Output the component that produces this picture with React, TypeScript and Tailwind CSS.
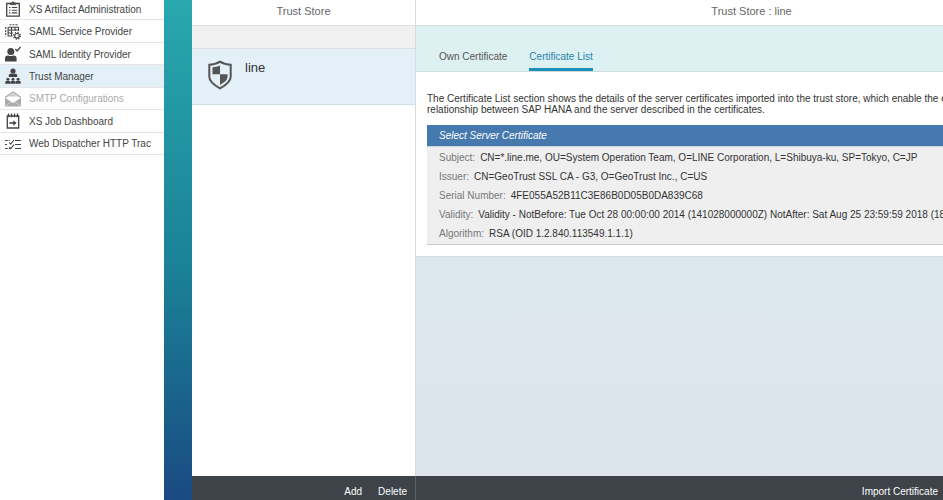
import type { ReactNode } from "react";

const ClipboardIcon = () => (
  <svg width="16" height="16" viewBox="0 0 16 16" fill="none" stroke="currentColor" strokeWidth="1.3">
    <path d="M5 2.500H1.700v12.700h12.600V2.500H11" />
    <path d="M5.200 1.800h1.600L8 .5l1.200 1.300h1.600v2H5.200z" fill="currentColor" strokeWidth="0.6" />
    <path d="M4 6.500h1.400M6.800 6.500h5.400M4 9.200h1.400M6.800 9.200h5.400M4 11.900h1.400M6.800 11.900h5.400" strokeWidth="1.100" />
  </svg>
);

const ServiceIcon = () => (
  <svg width="16" height="16" viewBox="0 0 16 16" fill="none" stroke="currentColor" strokeWidth="1.100">
    <path d="M4.500.8h9" strokeDasharray="2 1" />
    <path d="M.7 3v9.500" strokeDasharray="2 1" />
    <path d="M3.100 3.200h10.400v3.800M3.100 3.200v8.800H7.500M3.100 6h10.400M3.100 9H8M6.500 3v9M10 3v4" />
    <circle cx="12" cy="11.800" r="2.300" />
    <circle cx="12" cy="11.800" r="3.400" strokeWidth="1.300" strokeDasharray="1.200 1.470" />
  </svg>
);

const IdentityIcon = () => (
  <svg width="16" height="16" viewBox="0 0 16 16" fill="currentColor">
    <circle cx="5.800" cy="5.500" r="3.500" />
    <path d="M0 15.500v-3.300c0-1.700 1.200-2.700 2.800-2.700h.6c1.500.8 3.300.8 4.800 0h.6c1.600 0 2.800 1 2.800 2.700v3.300z" />
    <path d="M10.400 3l1.700 1.900L15.600.9" fill="none" stroke="currentColor" strokeWidth="1.300" />
  </svg>
);

const TrustIcon = () => (
  <svg width="16" height="16" viewBox="0 0 16 16" fill="currentColor">
    <circle cx="8" cy="3" r="2.600" />
    <path d="M3.800 9V7.500c0-1.200.8-1.800 1.800-1.800h4.800c1 0 1.800.6 1.800 1.800V9z" />
    <circle cx="2.900" cy="11.300" r="1.500" />
    <circle cx="8" cy="11.300" r="1.500" />
    <circle cx="13.100" cy="11.300" r="1.500" />
    <path d="M.3 15.700v-1.500c0-.8.500-1.200 1-1.200h3.200c.5 0 1 .4 1 1.200v1.500zM5.700 15.700v-1.500c0-.8.4-1.200.9-1.200h2.800c.5 0 .9.400.9 1.200v1.500zM10.500 15.700v-1.500c0-.8.5-1.200 1-1.200h3.200c.5 0 1 .4 1 1.200v1.500z" />
  </svg>
);

const MailIcon = () => (
  <svg width="16" height="16" viewBox="0 0 16 16" fill="currentColor">
    <path d="M0 6.800L8 12l8-5.200v8.700H0z" />
    <path d="M.3 6.300L8 1l7.700 5.300" fill="none" stroke="currentColor" strokeWidth="1.400" />
    <path d="M3.200 5.600h9.600L8 2.200z" opacity=".6" />
    <path d="M.2 15.300L6 11M15.800 15.300L10 11" fill="none" stroke="white" strokeWidth=".5" />
  </svg>
);

const JobIcon = () => (
  <svg width="16" height="16" viewBox="0 0 16 16" fill="none" stroke="currentColor" strokeWidth="1.300">
    <path d="M2.300 3v12h11.400V3z" />
    <path d="M3.500.6v3.600M6.500.6v3.600M9.500.6v3.600M12.500.6v3.600" />
    <path d="M4.500 10h5" strokeWidth="1.600" />
    <path d="M8.300 7.200l3.400 2.800-3.400 2.800z" fill="currentColor" stroke="none" />
  </svg>
);

const TraceIcon = () => (
  <svg width="16" height="16" viewBox="0 0 16 16" fill="none" stroke="currentColor" strokeWidth="1.100">
    <path d="M0 4.500h2.800M3.800 4.500h1M10 4.500h6M0 8.500h2M10 8.500h6M0 12.500h2.800M3.800 12.500h1M10 12.500h6" />
    <path d="M4.300 6.500l1.400 1.600L9 4M4.300 11l1.400 1.600L9 8.600" />
  </svg>
);

const ShieldIcon = () => (
  <svg width="26" height="30" viewBox="0 0 26 30">
    <path
      d="M13 1.700c3.300 2.100 7 3 10.700 3v12c0 5.300-5 8.500-10.700 11.600C7.300 25.200 2.300 22 2.300 16.700v-12c3.700 0 7.400-.9 10.700-3z"
      fill="none"
      stroke="currentColor"
      strokeWidth="2"
    />
    <path d="M13 5.500v8.800H5.500V7.200C8.200 7 10.700 6.500 13 5.500zM13 14.300h7.500v2.500c0 3.500-3.300 5.600-7.500 8.200z" fill="currentColor" />
  </svg>
);

type NavItem = { label: string; icon: ReactNode; active?: boolean; disabled?: boolean };

const navItems: NavItem[] = [
  { label: "XS Artifact Administration", icon: <ClipboardIcon /> },
  { label: "SAML Service Provider", icon: <ServiceIcon /> },
  { label: "SAML Identity Provider", icon: <IdentityIcon /> },
  { label: "Trust Manager", icon: <TrustIcon />, active: true },
  { label: "SMTP Configurations", icon: <MailIcon />, disabled: true },
  { label: "XS Job Dashboard", icon: <JobIcon /> },
  { label: "Web Dispatcher HTTP Trac", icon: <TraceIcon /> },
];

const details = [
  ["Subject:", "CN=*.line.me, OU=System Operation Team, O=LINE Corporation, L=Shibuya-ku, SP=Tokyo, C=JP"],
  ["Issuer:", "CN=GeoTrust SSL CA - G3, O=GeoTrust Inc., C=US"],
  ["Serial Number:", "4FE055A52B11C3E86B0D05B0DA839C68"],
  ["Validity:", "Validity - NotBefore: Tue Oct 28 00:00:00 2014 (141028000000Z) NotAfter: Sat Aug 25 23:59:59 2018 (18"],
  ["Algorithm:", "RSA (OID 1.2.840.113549.1.1.1)"],
];

export default function App() {
  return (
    <div className="flex h-screen overflow-hidden bg-linear-to-b from-[#29a8ae] via-[#1a8096] via-55% to-[#1a4a82] font-['Liberation_Sans',Arial,sans-serif] text-[10px] leading-[11px] text-[#333333]">
      <nav className="mr-7 w-41 shrink-0 overflow-hidden bg-white">
        <ul className="-mt-0.5 grid h-[157px] grid-rows-7">
          {navItems.map((item) => (
            <li key={item.label} className={`border-b border-[#e5e5e5] ${item.active ? "bg-[#e3f0f8]" : ""}`}>
              <button
                disabled={item.disabled}
                className={`flex h-full w-full items-center gap-2 pt-px pl-[5px] whitespace-nowrap ${item.disabled ? "text-[#aaaaaa]" : "text-[#444444]"}`}
              >
                {item.icon}
                {item.label}
              </button>
            </li>
          ))}
        </ul>
      </nav>

      <section className="flex w-56 shrink-0 flex-col border-r border-[#d9dcde] bg-white">
        <h2 className="flex h-[26px] shrink-0 items-center justify-center border-b border-[#dddddd] pb-0.5 text-[11px] text-[#666666]">
          Trust Store
        </h2>
        <div className="h-[23px] shrink-0 border-b border-[#dcdfe1] bg-[#f0f0f0]" />
        <button className="flex h-14 shrink-0 items-start gap-3 border-b border-[#d3dfe6] bg-[#e3f0f8] pt-[11px] pl-[15px] text-left">
          <span className="text-[#555555]">
            <ShieldIcon />
          </span>
          <span className="text-[13px] leading-4">line</span>
        </button>
        <footer className="-mr-px mt-auto flex h-6 shrink-0 items-center justify-end gap-4 border-r border-[#5b6166] bg-[#3d4349] pt-1.5 pr-2 text-white">
          <button>Add</button>
          <button>Delete</button>
        </footer>
      </section>

      <main className="flex min-w-0 flex-1 flex-col overflow-hidden bg-linear-to-b from-[#dbecee] to-[#dde4ec]">
        <h1 className="flex h-[26px] shrink-0 items-center justify-center border-b border-[#d3dfe1] bg-white pb-0.5 pl-36 text-[11px] text-[#666666]">
          Trust Store : line
        </h1>
        <div className="flex h-[46px] shrink-0 items-end gap-[22px] border-b border-[#cfdcde] bg-[#ddf0f2] pl-[23px]">
          <button className="border-b-3 border-transparent pb-1.5 text-[#555555]">Own Certificate</button>
          <button className="border-b-3 border-[#1c8fba] pb-1.5 text-[#2484ab]">Certificate List</button>
        </div>
        <div className="shrink-0 border-b border-[#d3dce0] bg-white pt-[21px] pb-[11px] pl-[11px] whitespace-nowrap">
          <p>
            The Certificate List section shows the details of the server certificates imported into the trust store, which enable the e
            <br />
            relationship between SAP HANA and the server described in the certificates.
          </p>
          <h3 className="mt-2.5 flex h-[22px] items-center border-b border-[#c9d6e2] bg-[#4679ad] pl-3 text-white italic">
            Select Server Certificate
          </h3>
          <dl className="border-b border-[#c8c8c8] bg-[#efefef] pt-px pb-px pl-3">
            {details.map(([term, value]) => (
              <div key={term} className="flex h-[19px] items-center gap-[5px]">
                <dt className="text-[#777777]">{term}</dt>
                <dd>{value}</dd>
              </div>
            ))}
          </dl>
        </div>
        <footer className="mt-auto flex h-6 shrink-0 items-center justify-end bg-[#3d4349] pt-1.5 pr-[5px] text-white">
          <button>Import Certificate</button>
        </footer>
      </main>
    </div>
  );
}
